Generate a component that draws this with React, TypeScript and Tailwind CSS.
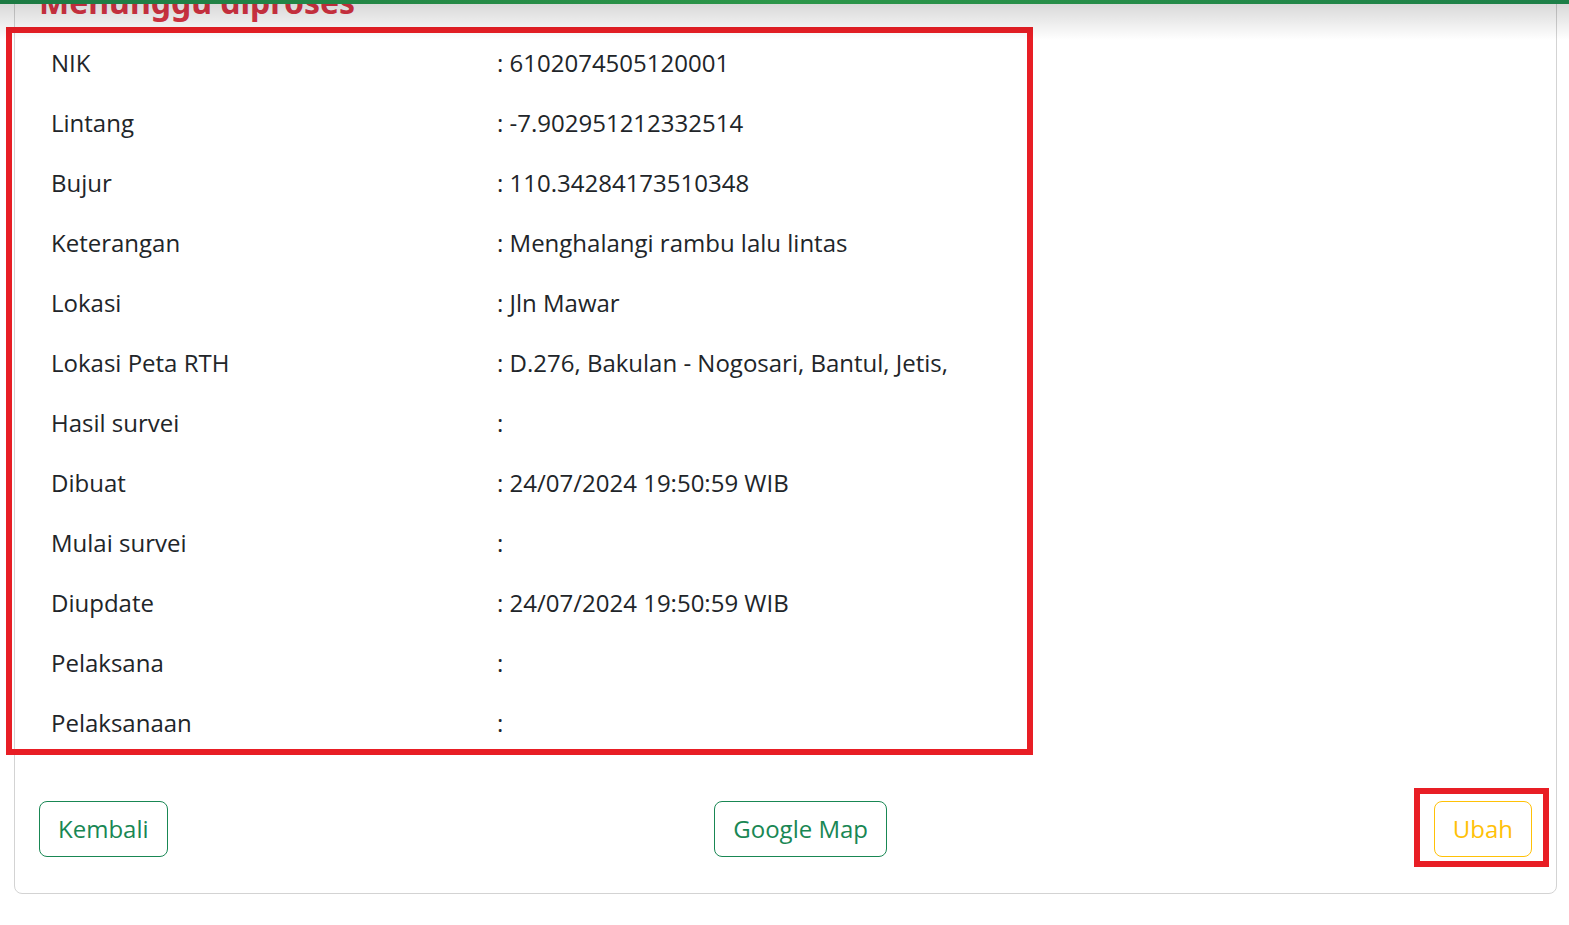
import React from "react";

const rows: [string, string][] = [
  ["NIK", "6102074505120001"],
  ["Lintang", "-7.902951212332514"],
  ["Bujur", "110.34284173510348"],
  ["Keterangan", "Menghalangi rambu lalu lintas"],
  ["Lokasi", "Jln Mawar"],
  ["Lokasi Peta RTH", "D.276, Bakulan - Nogosari, Bantul, Jetis,"],
  ["Hasil survei", ""],
  ["Dibuat", "24/07/2024 19:50:59 WIB"],
  ["Mulai survei", ""],
  ["Diupdate", "24/07/2024 19:50:59 WIB"],
  ["Pelaksana", ""],
  ["Pelaksanaan", ""],
];

export default function App() {
  return (
    <div className="relative h-[925px] overflow-hidden bg-white font-['Open_Sans',sans-serif] text-[#212529]">
      {/* header edge + shadow */}
      <div className="absolute inset-x-0 top-0 z-10 pointer-events-none">
        <div className="h-[4px] bg-gradient-to-r from-[#1c7a43] via-[#2c9649] to-[#1d7f48]"></div>
        <div className="h-[36px] bg-gradient-to-b from-black/15 to-transparent"></div>
      </div>

      <div className="ml-[14px] w-[1543px] -mt-[60px] rounded-lg border border-[#d3d3d3] px-[24px] pt-[41px] pb-[36px]">
        <h2 className="font-['Noto_Sans',sans-serif] text-[32px] font-bold leading-[40px] text-[#dc3545] mb-[11px]">
          Menunggu diproses
        </h2>

        <div className="w-[980px]">
          {rows.map(([label, value]) => (
            <div key={label} className="flex h-[60px] items-center pl-[12px] text-[24px] leading-[60px]">
              <div className="w-[446px] shrink-0">{label}</div>
              <div>: {value}</div>
            </div>
          ))}
        </div>

        <div className="mt-[48px] flex items-center justify-between">
          <button className="h-[56px] rounded-lg border border-[#198754] px-[18px] text-[24px] leading-[54px] text-[#198754]">
            Kembali
          </button>
          <button className="h-[56px] rounded-lg border border-[#198754] px-[18px] text-[24px] leading-[54px] text-[#198754]">
            Google Map
          </button>
          <button className="h-[56px] rounded-lg border border-[#ffc107] px-[18px] text-[24px] leading-[54px] text-[#ffc107]">
            Ubah
          </button>
        </div>
      </div>

      {/* annotation boxes */}
      <div className="absolute left-[6px] top-[27px] h-[728px] w-[1027px] border-[6px] border-[#e81e25]"></div>
      <div className="absolute left-[1414px] top-[788px] h-[79px] w-[135px] border-[6px] border-[#e81e25]"></div>
    </div>
  );
}
